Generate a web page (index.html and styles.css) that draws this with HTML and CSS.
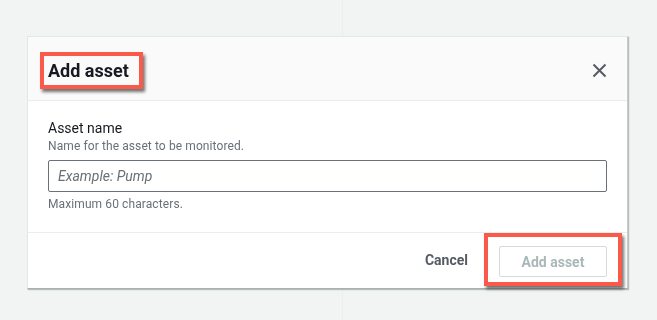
FILE: index.html
```html
<!DOCTYPE html>
<html lang="en">
<head>
	<meta charset="utf-8">
	<title>Add asset</title>
	<link rel="stylesheet" href="styles.css">
</head>
<body>
	<div class="page">
		<div class="side"></div>
		<div class="main"></div>
	</div>

	<div class="overlay">
		<div class="modal">
			<div class="modal-header">
				<h2 class="mark title">Add asset</h2>
				<button class="close" type="button" aria-label="Close">
					<svg width="15" height="15" viewBox="0 0 15 15">
						<path d="M1.5 1.5 L13.5 13.5 M13.5 1.5 L1.5 13.5" stroke="#545b64" stroke-width="2" fill="none"/>
					</svg>
				</button>
			</div>
			<div class="modal-body">
				<label class="label" for="asset">Asset name</label>
				<div class="desc">Name for the asset to be monitored.</div>
				<input id="asset" type="text" placeholder="Example: Pump">
				<div class="hint">Maximum 60 characters.</div>
			</div>
			<div class="modal-footer">
				<button class="link" type="button">Cancel</button>
				<div class="mark">
					<button class="primary" type="button" disabled>Add asset</button>
				</div>
			</div>
		</div>
	</div>
</body>
</html>
```

FILE: styles.css
```css
*{
	margin: 0;
	box-sizing: border-box;
}

body{
	background: #f2f3f3;
	font-family: 'Roboto', 'Liberation Sans', sans-serif;
	color: #16191f;
}

.page{
	display: grid;
	grid-template-columns: 343px 1fr;
	height: 320px;
}

.side{
	border-right: 1px solid #eceeee;
}

.overlay{
	position: fixed;
	top: 0;
	left: 0;
	right: 0;
	bottom: 0;
	padding: 36px 29px 0 27px;
}

.modal{
	background: #fff;
	border: 1px solid #e4e7e7;
	border-right-color: #c8cccc;
	border-bottom-color: #a9b0b0;
	box-shadow: 1px 1px 1px rgba(0, 28, 36, 0.25);
}

.modal-header{
	display: flex;
	justify-content: space-between;
	align-items: center;
	background: #fafafa;
	border-bottom: 1px solid #eaeded;
	padding: 15px 20px 11px 12px;
}

.mark{
	border: 4px solid #f95a4a;
	box-shadow: 2px 3px 3px rgba(0, 0, 0, 0.55);
}

.title{
	display: inline-block;
	font-size: 18px;
	font-weight: 700;
	line-height: 22px;
	padding: 4px 10px 3px 4px;
}

.close{
	border: none;
	background: none;
	padding: 0;
	width: 15px;
	height: 15px;
	display: flex;
}

.modal-body{
	padding: 17px 20px 20px 20px;
	border-bottom: 1px solid #eaeded;
}

.label{
	display: block;
	font-size: 14px;
	line-height: 20px;
}

.desc, .hint{
	font-size: 12px;
	line-height: 16px;
	color: #687078;
	letter-spacing: 0.1px;
}

input{
	display: block;
	width: 100%;
	height: 32px;
	margin: 6px 0 4px 0;
	padding: 0 9px;
	border: 1px solid #6a7178;
	border-radius: 2px;
	font-family: 'Roboto', 'Liberation Sans', sans-serif;
	font-size: 14px;
}

input::placeholder{
	color: #687078;
	font-style: italic;
}

.modal-footer{
	display: flex;
	justify-content: flex-end;
	align-items: flex-start;
	gap: 16px;
	height: 55px;
	padding-right: 5px;
}

.modal-footer .mark{
	padding: 9px 11px 5px 11px;
}

.link{
	border: none;
	background: none;
	padding: 0;
	margin-top: 19px;
	font-family: 'Roboto', 'Liberation Sans', sans-serif;
	font-size: 14px;
	font-weight: 700;
	color: #545b64;
}

.primary{
	display: block;
	width: 108px;
	height: 31px;
	border: 1px solid #d5dbdb;
	border-radius: 2px;
	background: #fff;
	font-family: 'Roboto', 'Liberation Sans', sans-serif;
	font-size: 14px;
	font-weight: 700;
	color: #aab7b8;
}
```
